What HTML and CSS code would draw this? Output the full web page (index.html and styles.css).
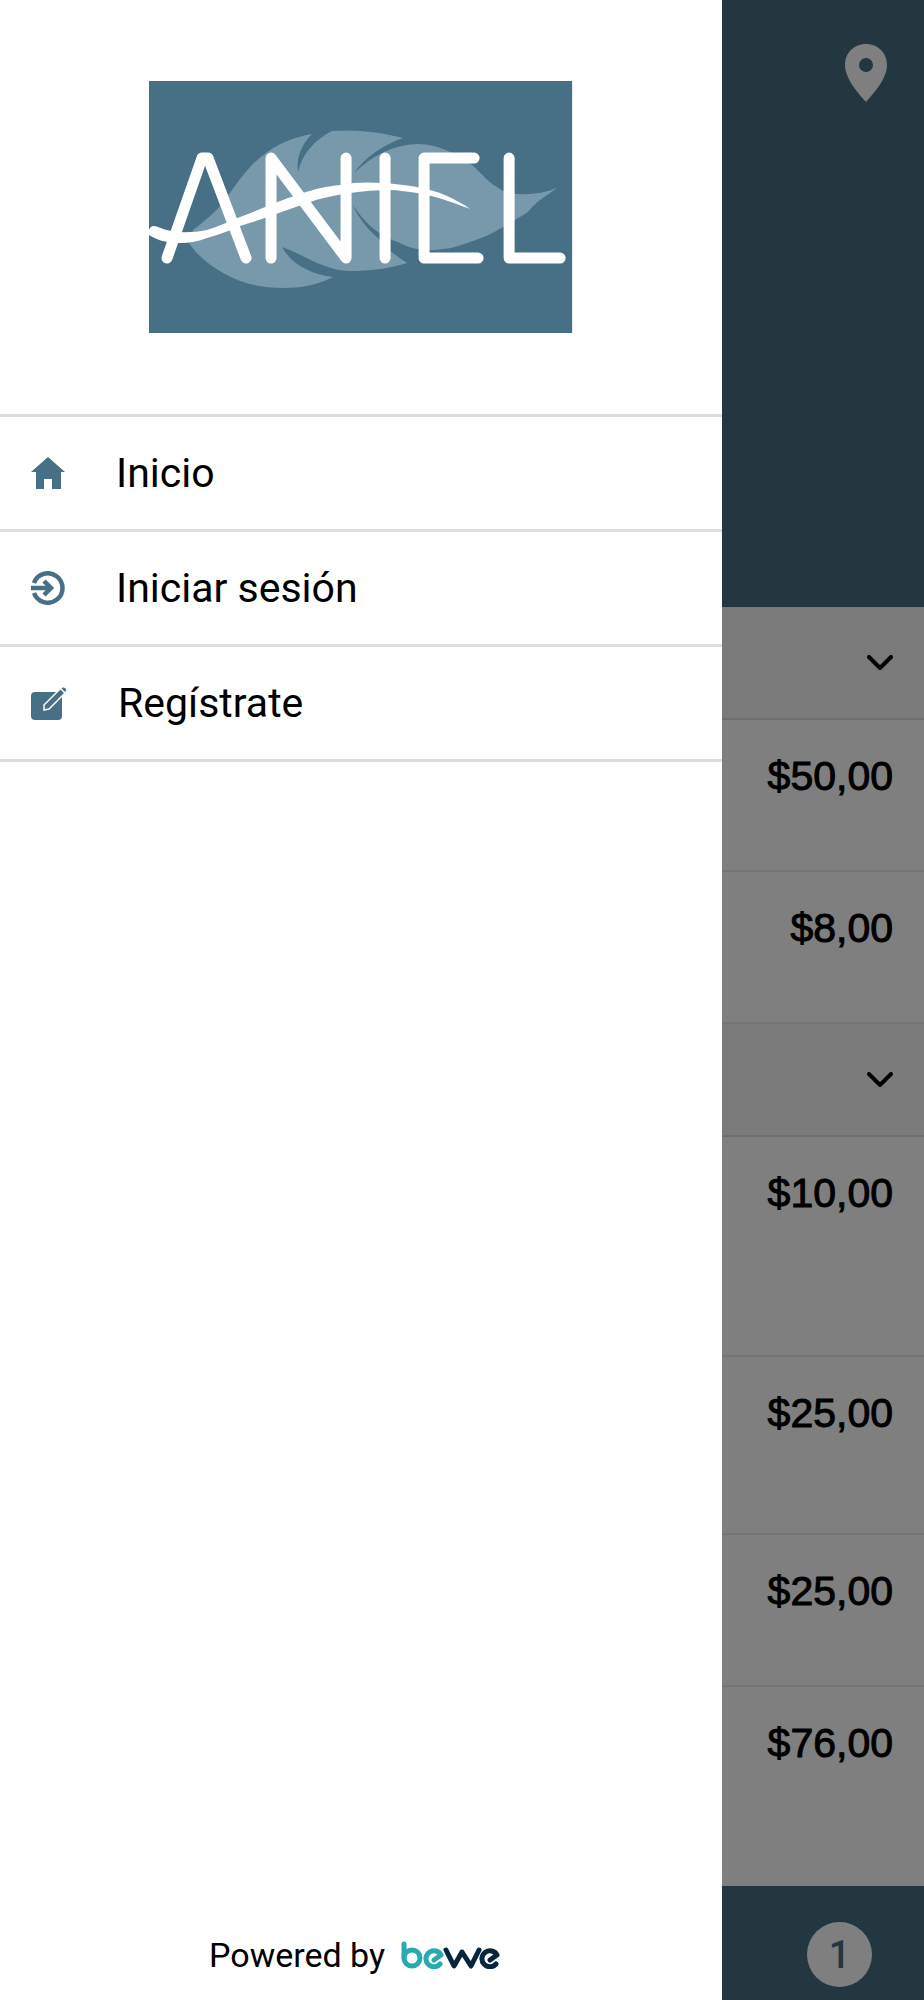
FILE: index.html
```html
<!DOCTYPE html>
<html lang="es">
<head>
<meta charset="utf-8">
<meta name="viewport" content="width=device-width, initial-scale=1">
<title>Aniel</title>
<link rel="stylesheet" href="styles.css">
</head>
<body>
<div class="app">
  <header class="hero">
    <button class="icon-button" type="button" aria-label="Ubicación">
      <svg class="pin" viewBox="0 0 42 58" aria-hidden="true"><path fill-rule="evenodd" d="M21 0C9 0 0 9 0 21c0 13 12 27 21 37 9-10 21-24 21-37C42 9 33 0 21 0zm0 14a7 7 0 1 1 0 14 7 7 0 0 1 0-14z"/></svg>
    </button>
  </header>
  <main class="services">
    <button class="group" type="button" aria-label="Desplegar categoría">
      <svg class="chevron" viewBox="0 0 26 16" aria-hidden="true"><path d="M2 2l11 11L24 2"/></svg>
    </button>
    <div class="service medium"><span class="price">$50,00</span></div>
    <div class="service medium"><span class="price">$8,00</span></div>
    <button class="group" type="button" aria-label="Desplegar categoría">
      <svg class="chevron" viewBox="0 0 26 16" aria-hidden="true"><path d="M2 2l11 11L24 2"/></svg>
    </button>
    <div class="service tall"><span class="price">$10,00</span></div>
    <div class="service large"><span class="price">$25,00</span></div>
    <div class="service medium"><span class="price">$25,00</span></div>
    <div class="service last"><span class="price">$76,00</span></div>
  </main>
  <footer class="cart"><span class="count">1</span></footer>
</div>
<div class="scrim"></div>
<aside class="drawer">
  <div class="brand">
    <svg class="logo" viewBox="0 0 423 252" role="img" aria-label="Aniel">
      <rect width="423" height="252" fill="#476f86"/>
      <path fill="#7899ab" d="M44 149C56 140 66 131 74 122C84 107 92 96 101 86C118 68 138 57 163 53C152 64 147 77 149 91C153 73 165 59 183 50C205 48 232 51 254 57C234 64 216 76 205 92C224 74 244 64 268 63C280 63 291 66 301 71C309 75 316 79 323 84C333 93 340 102 348 106C354 111 361 113 368 113C382 114 395 112 408 107C398 114 390 119 383 126C380 130 378 132 374 134C368 138 361 142 354 146C342 153 331 158 318 162C305 167 293 169 281 169C270 169 260 167 251 162C229 155 215 141 203 123C209 136 218 148 229 157C237 167 247 175 258 182C239 188 220 190 201 190C173 189 154 173 133 166C143 184 162 193 184 196C169 204 152 207 134 207C111 207 91 202 74 192C60 184 48 174 40 162Z"/>
      <g fill="none" stroke="#fff" stroke-width="11" stroke-linecap="round" stroke-linejoin="round">
        <polyline points="18,177 53,77 59,77 97,177"/>
        <polyline points="122,177 122,77 197,177 197,77"/>
        <line x1="236" y1="77" x2="236" y2="177"/>
        <polyline points="325,77 275,77 275,177 329,177"/>
        <polyline points="360,77 360,177 411,177"/>
      </g>
      <path fill="#fff" d="M0 149Q2 143 9 146C25 153 42 152 58 149C69 146 80 140 91 136C112 128 132 119 151 113C165 108 179 105 191 104C206 101 220 101 234 102C247 103 258 104 268 106C290 110 307 118 321 128C303 121 286 115 268 112C259 111 250 109 241 109C228 109 214 110 201 112C186 114 172 117 158 122L124 134C111 139 99 142 88 146C78 151 68 154 58 157C48 161 39 162 31 162C20 162 9 160 0 154Z"/>
    </svg>
  </div>
  <nav class="menu">
    <a class="item" href="#inicio">
      <svg class="icon" viewBox="0 0 34 34" aria-hidden="true"><path d="M17 1L34 16h-4v17H21V23h-8v10H5V16H0z"/></svg>
      <span>Inicio</span>
    </a>
    <a class="item" href="#sesion">
      <svg class="icon" viewBox="0 0 34 34" aria-hidden="true"><g fill="none" stroke="currentColor" stroke-width="4.500"><path d="M3 12A14.700 14.700 0 1 1 3 22"/><path d="M0 17h20M13 10l7 7-7 7"/></g></svg>
      <span>Iniciar sesión</span>
    </a>
    <a class="item" href="#registro">
      <svg class="icon wide" viewBox="0 0 36 34" aria-hidden="true"><rect y="6" width="31" height="28" rx="4"/><path stroke="#fff" stroke-width="1.500" d="M13 24v-5L31 1q2-1 4 1t0 4L18 23z"/><path stroke="#fff" stroke-width="1.500" d="M29 2l6 6"/></svg>
      <span>Regístrate</span>
    </a>
  </nav>
  <div class="powered">
    <span>Powered by</span>
    <svg class="bewe" viewBox="0 0 100 28" role="img" aria-label="bewe">
      <g fill="none" stroke-width="5" stroke-linecap="round" stroke-linejoin="round">
        <g stroke="#27aab2"><line x1="3" y1="3" x2="3" y2="17"/><circle cx="11" cy="17" r="8"/><path d="M33 19L40 14A8 8 0 1 0 39 23"/></g>
        <g stroke="#06263f"><polyline points="45,9 53,25 61,11 70,25 78,9"/><path d="M89 19L96 14A8 8 0 1 0 95 23"/></g>
      </g>
    </svg>
  </div>
</aside>
</body>
</html>
```
FILE: styles.css
```css
* { box-sizing: border-box; }
body { margin: 0; font-family: Roboto, sans-serif; color: #000; background: #fff; }
button { border: 0; padding: 0; background: none; font: inherit; color: inherit; }

.app { display: flex; flex-direction: column; min-height: 100vh; }
.hero { display: flex; justify-content: flex-end; align-items: flex-start; min-height: 607px; padding: 44px 37px; background: #476f82; color: #fff; }
.icon-button { display: flex; }
.pin { width: 42px; height: 58px; fill: currentColor; }
.services { display: flex; flex-direction: column; flex: 1; }
.group { display: flex; justify-content: flex-end; align-items: center; min-height: 113px; padding-right: 31px; background: #f5f5f5; border-bottom: 2px solid #dedede; }
.chevron { width: 26px; height: 16px; fill: none; stroke: #000; stroke-width: 4; stroke-linecap: round; stroke-linejoin: round; }
.service { display: flex; justify-content: flex-end; align-items: flex-start; padding: 36px 31px; border-bottom: 2px solid #ebebeb; }
.medium { min-height: 152px; }
.large { min-height: 178px; }
.tall { min-height: 220px; }
.last { flex: 1; border-bottom: 0; }
.price { font-family: "Liberation Sans", Arial, sans-serif; font-size: 41px; line-height: 40px; -webkit-text-stroke: 1px #000; }
.cart { display: flex; justify-content: flex-end; min-height: 114px; padding: 36px 52px 12px; background: #476f82; }
.count { display: flex; justify-content: center; align-items: center; width: 65px; height: 65px; border-radius: 50%; background: #fff; color: #476f82; font-size: 38px; font-weight: 500; }

.scrim { position: fixed; inset: 0; background: rgba(0, 0, 0, 0.5); }
.drawer { position: fixed; top: 0; bottom: 0; left: 0; width: 78.15%; display: flex; flex-direction: column; background: #fff; }
.brand { display: flex; justify-content: center; padding: 81px 0; border-bottom: 3px solid #dedede; }
.logo { width: 58.6%; }
.menu { display: flex; flex-direction: column; }
.item { display: flex; align-items: center; gap: 51px; min-height: 115px; padding: 0 31px; border-bottom: 3px solid #dedede; color: #000; font-size: 41px; line-height: 48px; text-decoration: none; }
.icon { width: 34px; height: 34px; flex: none; color: #476f85; fill: currentColor; }
.wide { width: 36px; }
.powered { display: flex; justify-content: center; align-items: center; gap: 16px; margin-top: auto; padding: 0 12px 25px 0; font-size: 34px; line-height: 40px; }
.bewe { width: 100px; height: 28px; }
```
